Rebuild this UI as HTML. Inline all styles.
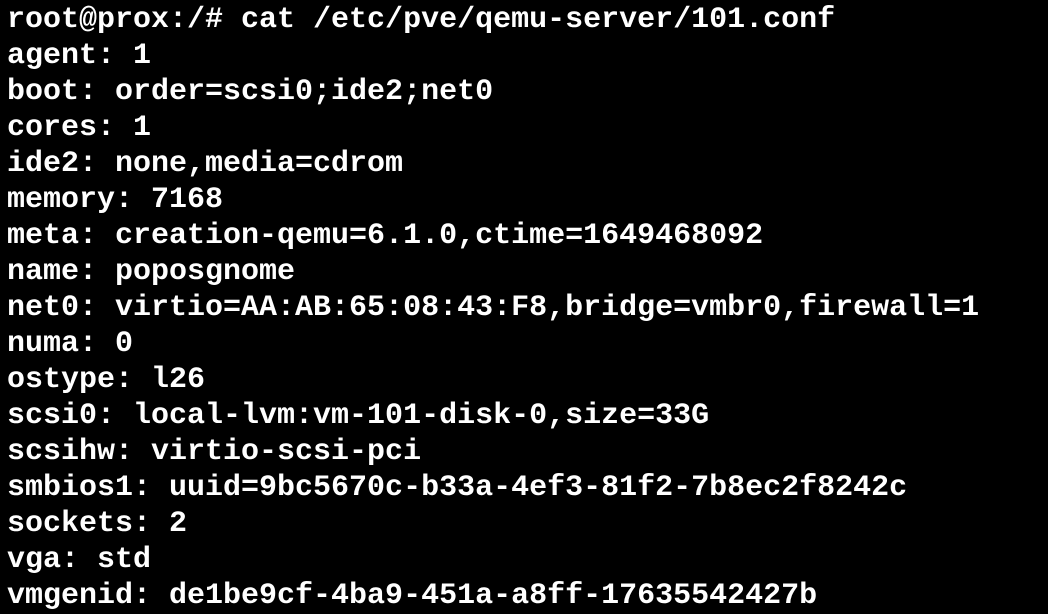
<!DOCTYPE html>
<html><head><style>
html,body{margin:0;padding:0;background:#000;width:1048px;height:610px;overflow:hidden}
pre{margin:0;position:absolute;left:7px;top:2px;font-family:"Liberation Mono",monospace;font-weight:bold;font-size:30px;line-height:36px;color:#fff;letter-spacing:0}
</style></head><body><pre>root@prox:/# cat /etc/pve/qemu-server/101.conf
agent: 1
boot: order=scsi0;ide2;net0
cores: 1
ide2: none,media=cdrom
memory: 7168
meta: creation-qemu=6.1.0,ctime=1649468092
name: poposgnome
net0: virtio=AA:AB:65:08:43:F8,bridge=vmbr0,firewall=1
numa: 0
ostype: l26
scsi0: local-lvm:vm-101-disk-0,size=33G
scsihw: virtio-scsi-pci
smbios1: uuid=9bc5670c-b33a-4ef3-81f2-7b8ec2f8242c
sockets: 2
vga: std
vmgenid: de1be9cf-4ba9-451a-a8ff-17635542427b</pre></body></html>
